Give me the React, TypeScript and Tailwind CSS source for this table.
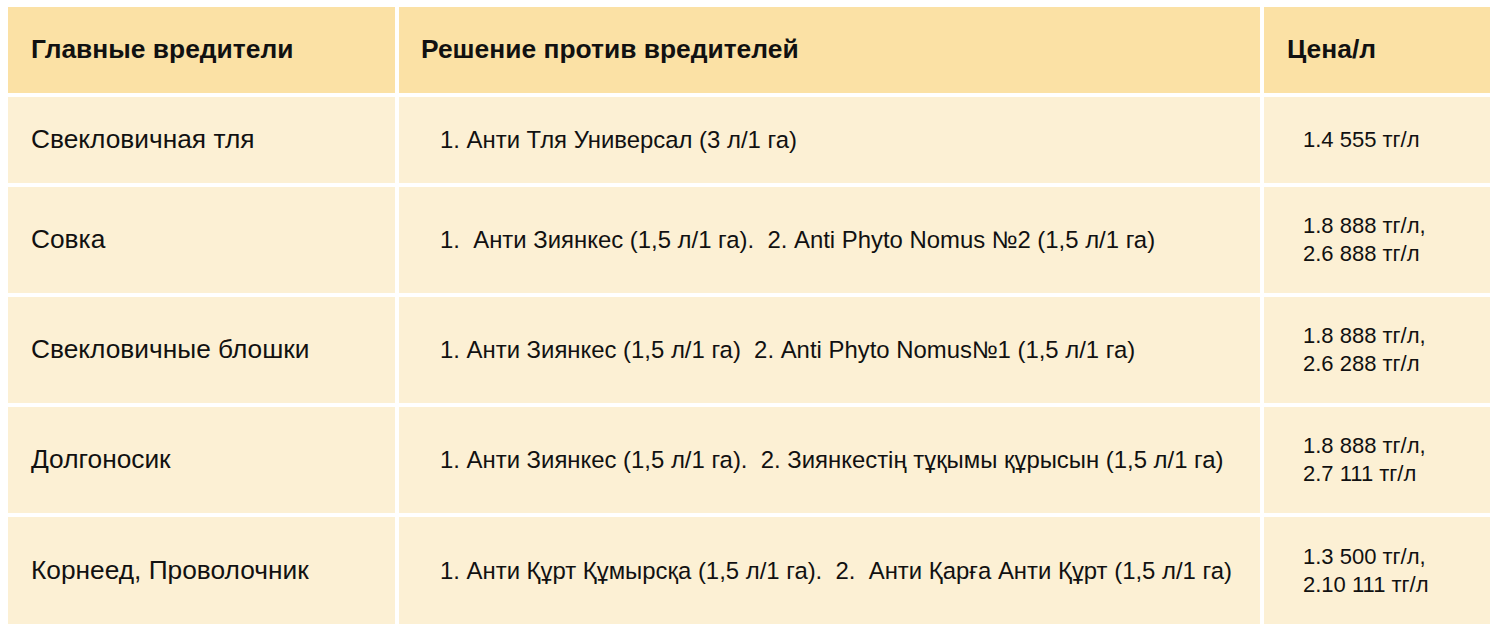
// Pest control price table
const rows = [
  {
    pest: "Свекловичная тля",
    solution: "1. Анти Тля Универсал (3 л/1 га)",
    prices: ["1.4 555 тг/л"],
  },
  {
    pest: "Совка",
    solution: "1.  Анти Зиянкес (1,5 л/1 га).  2. Anti Phyto Nomus №2 (1,5 л/1 га)",
    prices: ["1.8 888 тг/л,", "2.6 888 тг/л"],
  },
  {
    pest: "Свекловичные блошки",
    solution: "1. Анти Зиянкес (1,5 л/1 га)  2. Anti Phyto Nomus№1 (1,5 л/1 га)",
    prices: ["1.8 888 тг/л,", "2.6 288 тг/л"],
  },
  {
    pest: "Долгоносик",
    solution: "1. Анти Зиянкес (1,5 л/1 га).  2. Зиянкестің тұқымы құрысын (1,5 л/1 га)",
    prices: ["1.8 888 тг/л,", "2.7 111 тг/л"],
  },
  {
    pest: "Корнеед, Проволочник",
    solution: "1. Анти Құрт Құмырсқа (1,5 л/1 га).  2.  Анти Қарға Анти Құрт (1,5 л/1 га)",
    prices: ["1.3 500 тг/л,", "2.10 111 тг/л"],
  },
];

export default function App() {
  return (
    <div className="min-h-screen bg-white pt-[7px] pl-[8px] font-['Liberation_Sans',Arial,sans-serif] text-[#111]">
      <div className="grid grid-cols-[387px_861px_226px] grid-rows-[86px_86px_106px_106px_106px_107px] gap-[4px]">
        {/* Header */}
        <div className="flex items-center bg-[#fbe1a5] pl-[23px] text-[26.4px] font-bold">Главные вредители</div>
        <div className="flex items-center bg-[#fbe1a5] pl-[22px] text-[26.4px] font-bold">Решение против вредителей</div>
        <div className="flex items-center bg-[#fbe1a5] pl-[23px] text-[26.4px] font-bold">Цена/л</div>

        {rows.map((row, idx) => (
          <div key={idx} className="contents">
            <div className="flex items-center bg-[#fcf0d4] pl-[23px] text-[26.3px]">{row.pest}</div>
            <div className="flex items-center bg-[#fcf0d4] pl-[41px] text-[23.9px] whitespace-pre">{row.solution}</div>
            <div className="flex flex-col justify-center bg-[#fcf0d4] pl-[39px] text-[22px] leading-[28px]">
              {row.prices.map((p, i) => (
                <p key={i}>{p}</p>
              ))}
            </div>
          </div>
        ))}
      </div>
    </div>
  );
}
